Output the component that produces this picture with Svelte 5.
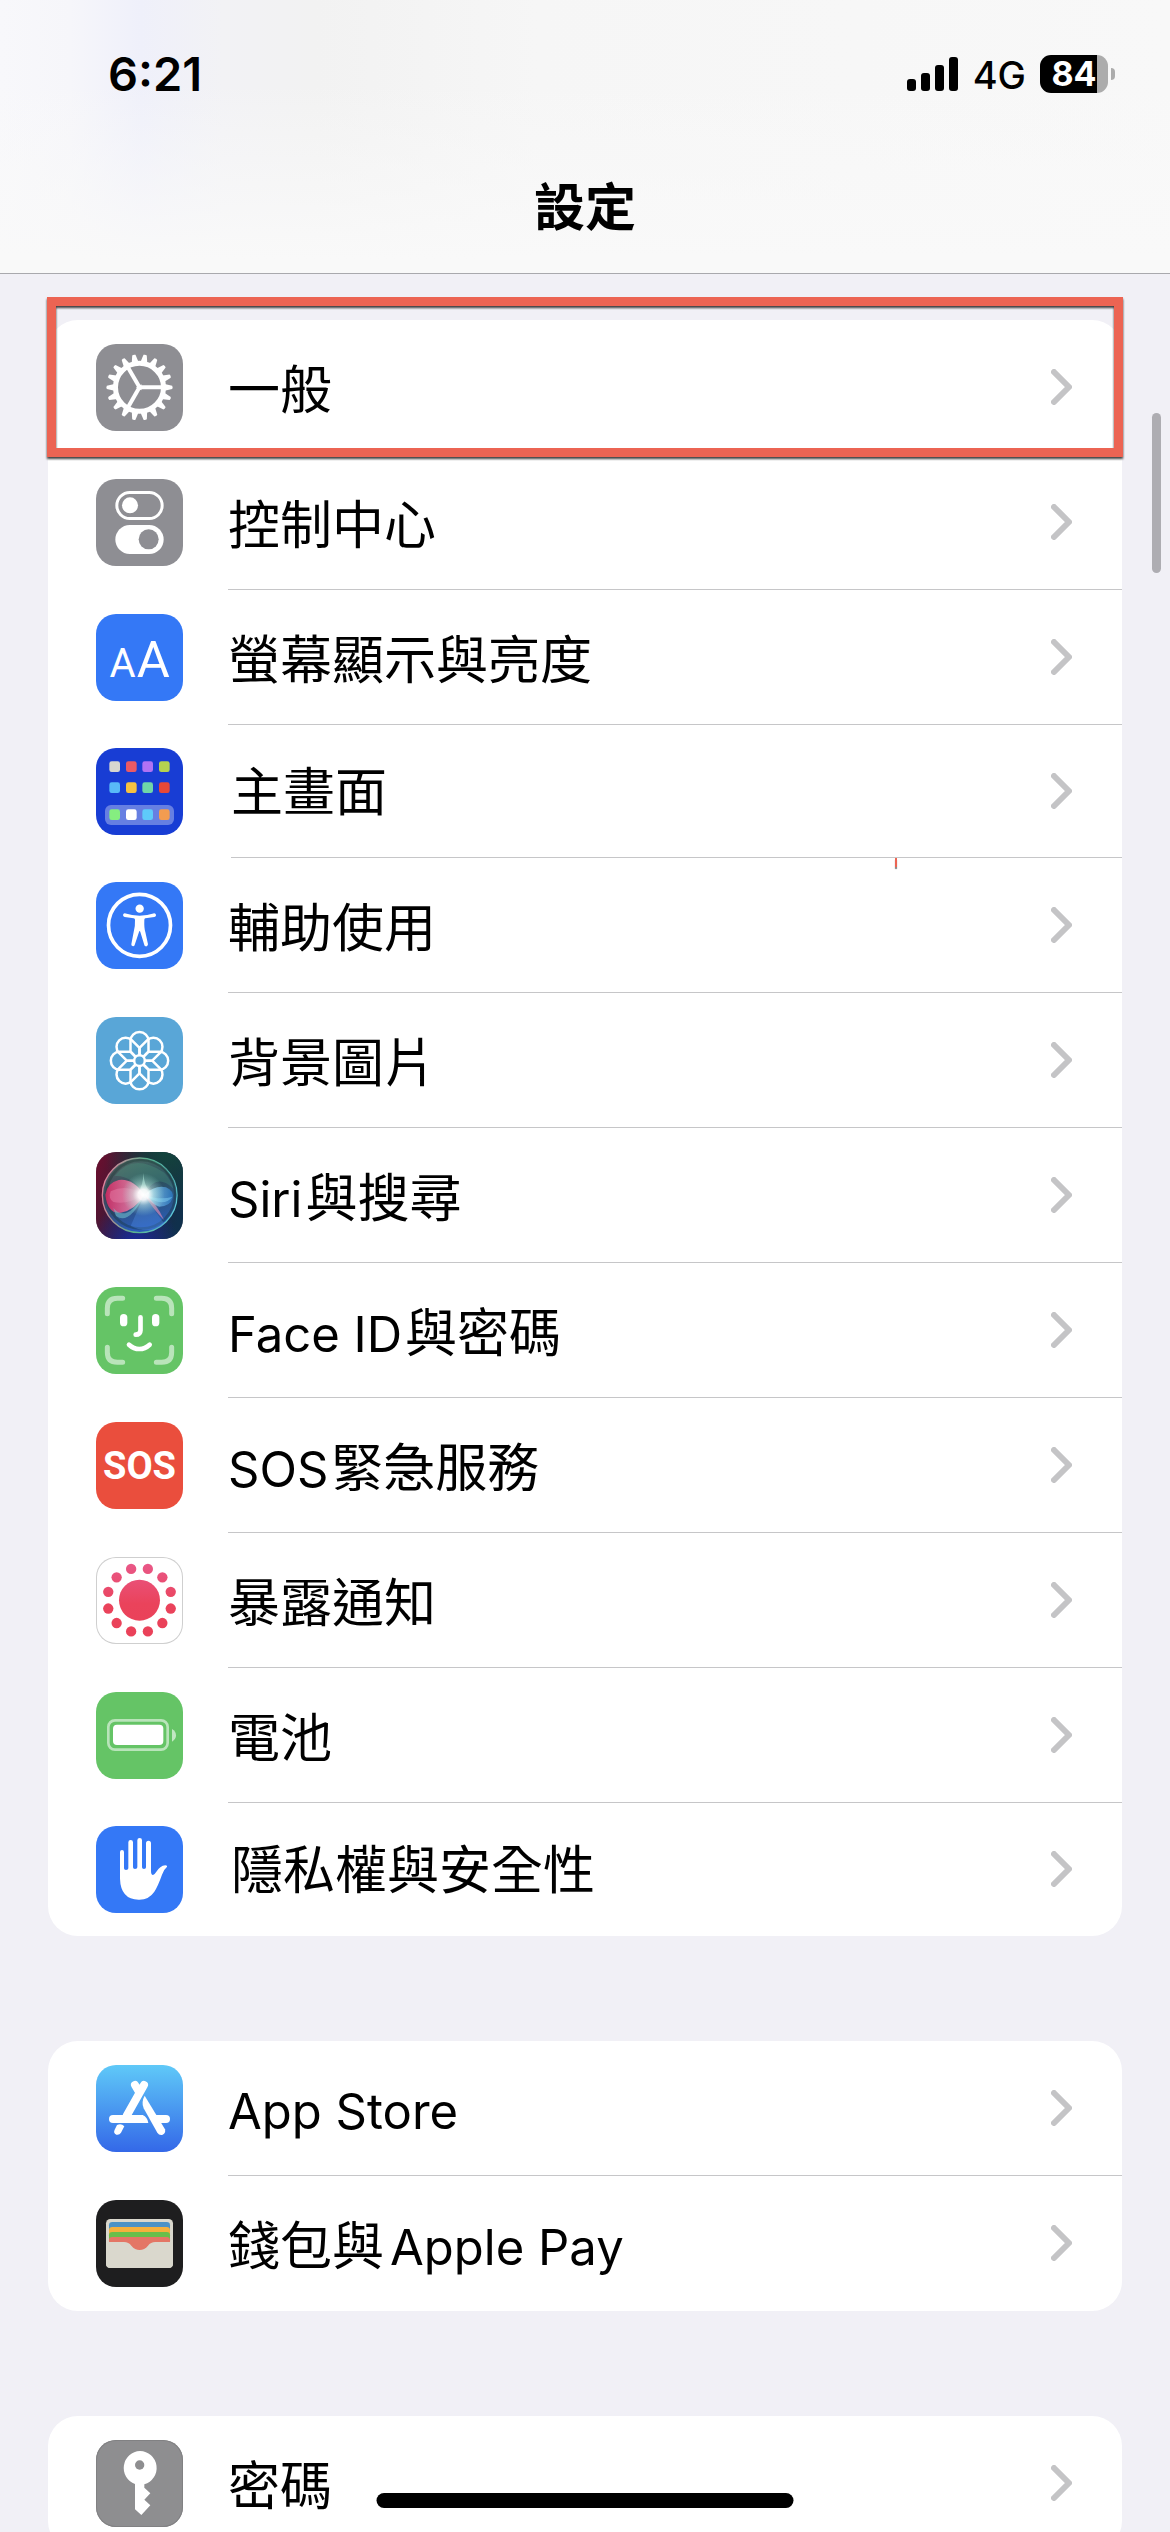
<script lang="ts">
  type Item = { icon: string; label: string[]; compact?: boolean; marked?: boolean };

  const groups: Item[][] = [
    [
      { icon: 'general', label: ['一般'], marked: true },
      { icon: 'control', label: ['控制中心'] },
      { icon: 'display', label: ['螢幕顯示與亮度'] },
      { icon: 'home', label: ['主畫面'], compact: true },
      { icon: 'access', label: ['輔助使用'] },
      { icon: 'wallpaper', label: ['背景圖片'] },
      { icon: 'siri', label: ['Siri', '與搜尋'] },
      { icon: 'faceid', label: ['Face ID', '與密碼'] },
      { icon: 'sos', label: ['SOS', '緊急服務'] },
      { icon: 'exposure', label: ['暴露通知'] },
      { icon: 'battery', label: ['電池'] },
      { icon: 'privacy', label: ['隱私權與安全性'], compact: true },
    ],
    [
      { icon: 'appstore', label: ['App Store'] },
      { icon: 'wallet', label: ['錢包與', 'Apple Pay'] },
    ],
    [{ icon: 'key', label: ['密碼'] }],
  ];

  const isLatin = (text: string) => /^[A-Za-z]/.test(text);
  const around = (n: number, start = 0) => Array.from({ length: n }, (_, i) => start + (i * 360) / n);
  const tiles = [
    [40, 40, '#d6d6d0'], [90, 40, '#ea5a65'], [139, 40, '#b072f4'], [189, 40, '#b5d24f'],
    [40, 103, '#58b9f8'], [90, 103, '#f6c140'], [139, 103, '#6fd6a8'], [189, 103, '#e64838'],
    [40, 184, '#85ee80'], [90, 184, '#ffffff'], [139, 184, '#5ecbfa'], [189, 184, '#f39c50'],
  ];
</script>

{#snippet glyph(kind: string)}
  <svg class="icon {kind}" viewBox="0 0 261 261" aria-hidden="true">
    {#if kind === 'general'}
      <g transform="translate(130.5 130)" fill="#fff">
        {#each around(18) as a}
          <path d="M72 -11 L98 -5 Q101 0 98 5 L72 11Z" transform="rotate({a})" />
        {/each}
        <circle r="72" fill="none" stroke="#fff" stroke-width="15" />
        {#each around(3) as a}
          <path d="M0 -6 H68 V6 H0Z" transform="rotate({a})" />
        {/each}
        <path d="M-11 0 L6 -9 V9Z" />
      </g>
    {:else if kind === 'control'}
      <rect x="62.5" y="40.5" width="136" height="78" rx="39" fill="none" stroke="#fff" stroke-width="9" />
      <circle cx="102" cy="79" r="24" fill="#fff" />
      <rect x="58" y="138" width="145" height="87" rx="43.5" fill="#fff" />
      <circle cx="158" cy="181" r="30" fill="#8e8e93" />
    {:else if kind === 'display'}
      <text x="80" y="188" class="small-a">A</text>
      <text x="172" y="188" class="large-a">A</text>
    {:else if kind === 'home'}
      <rect x="27" y="171" width="207" height="60" rx="18" fill="#fff" opacity=".34" />
      {#each tiles as [x, y, fill]}
        <rect {x} {y} width="32" height="32" rx="7" {fill} />
      {/each}
    {:else if kind === 'access'}
      <circle cx="130.5" cy="130" r="93" fill="none" stroke="#fff" stroke-width="11" />
      <circle cx="131" cy="80" r="12.5" fill="#fff" />
      <path d="M86 94 Q108 101 131 101 Q154 101 175 94 Q181 95 180 101 Q179 104 175 105 L148 109 Q145 110 145 113 Q144 138 148 150 L156 187 Q155 194 149 193 Q146 193 145 189 L133 150 Q131 144 129 150 L116 189 Q115 193 111 193 Q105 192 106 187 L113 150 Q118 130 117 113 Q117 110 113 109 L86 105 Q81 104 81 99 Q82 95 86 94Z" fill="#fff" />
    {:else if kind === 'wallpaper'}
      <g transform="translate(130.5 131)" fill="none" stroke="#fff" stroke-width="7.5" stroke-linejoin="round">
        {#each around(8) as a}
          <path d="M-10 -10 L-27 -27 V-60 A27 26 0 0 1 27 -60 V-27 L10 -10" transform="rotate({a})" />
        {/each}
        <circle r="16" />
      </g>
    {:else if kind === 'siri'}
      <defs>
        <linearGradient id="siri-base" x1="0" y1=".3" x2="1" y2=".6">
          <stop offset="0" stop-color="#65102f" />
          <stop offset=".5" stop-color="#24203c" />
          <stop offset="1" stop-color="#10304c" />
        </linearGradient>
        <radialGradient id="siri-green" cx=".8" cy="0" r=".7">
          <stop offset="0" stop-color="#12443c" />
          <stop offset="1" stop-color="#12443c" stop-opacity="0" />
        </radialGradient>
        <radialGradient id="siri-blue" cx=".45" cy="1.05" r=".5">
          <stop offset="0" stop-color="#1b2a9c" />
          <stop offset="1" stop-color="#1b2a9c" stop-opacity="0" />
        </radialGradient>
        <linearGradient id="siri-rim" x1="0" y1=".4" x2="1" y2=".6">
          <stop offset="0" stop-color="#e0809a" />
          <stop offset=".5" stop-color="#58b08c" />
          <stop offset="1" stop-color="#5cc8d8" />
        </linearGradient>
        <linearGradient id="siri-orb" x1="0" y1="0" x2=".3" y2="1">
          <stop offset="0" stop-color="#5c8070" stop-opacity=".8" />
          <stop offset=".5" stop-color="#34586a" stop-opacity=".75" />
          <stop offset="1" stop-color="#2c64c0" stop-opacity=".85" />
        </linearGradient>
        <linearGradient id="siri-pink">
          <stop offset="0" stop-color="#dc2a66" />
          <stop offset="1" stop-color="#f4a0c0" />
        </linearGradient>
        <linearGradient id="siri-cyan">
          <stop offset="0" stop-color="#b8ecff" />
          <stop offset="1" stop-color="#2a7cc8" />
        </linearGradient>
        <radialGradient id="siri-glow">
          <stop offset="0" stop-color="#fff" />
          <stop offset=".25" stop-color="#fff" stop-opacity=".9" />
          <stop offset=".5" stop-color="#d8fff4" stop-opacity=".45" />
          <stop offset="1" stop-color="#a0f0e0" stop-opacity="0" />
        </radialGradient>
      </defs>
      <rect width="261" height="261" fill="url(#siri-base)" />
      <rect width="261" height="261" fill="url(#siri-green)" />
      <rect width="261" height="261" fill="url(#siri-blue)" />
      <circle cx="131" cy="130" r="112" fill="url(#siri-orb)" stroke="url(#siri-rim)" stroke-width="4" />
      <circle cx="135" cy="127" r="103" fill="none" stroke="#14302c" stroke-width="8" opacity=".35" />
      <path d="M56 72 Q110 0 205 62 Q226 84 232 110 Q180 60 145 128 Q110 70 56 72Z" fill="#4fae8c" opacity=".25" />
      <path d="M145 128 Q110 78 68 84 Q34 92 28 128 Q34 186 74 182 Q118 174 145 128Z" fill="url(#siri-pink)" opacity=".85" />
      <path d="M145 128 Q92 94 44 118 Q36 140 52 150 Q92 160 145 128Z" fill="#e884ac" opacity=".45" />
      <path d="M52 168 Q90 214 145 128 Q100 220 60 192Z" fill="#7ad0d8" opacity=".5" />
      <path d="M145 128 Q178 98 210 106 Q234 116 230 138 Q222 164 190 164 Q168 158 145 128Z" fill="url(#siri-cyan)" opacity=".75" />
      <path d="M145 128 Q190 146 230 134 Q200 170 145 128Z" fill="#8fe0ff" opacity=".4" />
      <path d="M145 128 Q180 150 204 204 Q170 170 145 128Z" fill="#f090b8" opacity=".6" />
      <path d="M145 128 Q110 180 84 216 Q118 172 145 128 Q186 190 206 216 Q160 250 104 222Z" fill="#4f90e8" opacity=".35" />
      <path d="M142 62 Q146 110 164 116 L148 140 L126 122 Q142 100 142 62Z" fill="#c8fff0" opacity=".45" />
      <circle cx="142" cy="128" r="64" fill="url(#siri-glow)" />
    {:else if kind === 'faceid'}
      <path d="M34 80 V64 Q34 34 64 34 H80 M181 34 H197 Q227 34 227 64 V80 M227 181 V196 Q227 226 197 226 H181 M80 226 H64 Q34 226 34 196 V181" fill="none" stroke="#fff" stroke-width="15" stroke-linecap="round" opacity=".55" />
      <rect x="72" y="81" width="22" height="37" rx="11" fill="#fff" />
      <rect x="168" y="81" width="22" height="37" rx="11" fill="#fff" />
      <path d="M133.5 91 V130 Q133 143 119 143 M99 173 Q113 186 130 186 Q147 186 161 173" fill="none" stroke="#fff" stroke-width="14" stroke-linecap="round" />
    {:else if kind === 'sos'}
      <text x="130.5" y="171" class="sos-text">SOS</text>
    {:else if kind === 'exposure'}
      <defs>
        <linearGradient id="exposure-fill" gradientUnits="userSpaceOnUse" x1="0" y1="20" x2="0" y2="240">
          <stop offset="0" stop-color="#e95888" />
          <stop offset=".55" stop-color="#ea435b" />
          <stop offset="1" stop-color="#ea4159" />
        </linearGradient>
      </defs>
      <g fill="url(#exposure-fill)">
        <circle cx="130.5" cy="129.5" r="61.5" />
        {#each around(12, 15) as a}
          <circle cx={130.5 + 97 * Math.cos((a * Math.PI) / 180)} cy={129.5 + 97 * Math.sin((a * Math.PI) / 180)} r="15.5" />
        {/each}
      </g>
    {:else if kind === 'battery'}
      <rect x="37" y="85" width="178" height="88" rx="20" fill="none" stroke="#fff" stroke-width="8" opacity=".55" />
      <rect x="51" y="98" width="151" height="61" rx="12" fill="#fff" />
      <path d="M228 111 Q240 118 240 130 Q240 142 228 149Z" fill="#fff" opacity=".6" />
    {:else if kind === 'privacy'}
      <path d="M72 78 a6 6 0 0 1 12 0 V127 Q84 132 90 132 Q97 132 97 127 V49 a7 7 0 0 1 14 0 V124 Q111 129 117 129 Q124 129 124 124 V43 a7 7 0 0 1 14 0 V124 Q138 129 144 129 Q150 129 150 124 V52 a7 7 0 0 1 15 0 V135 Q165 147 171 147 Q175 147 180 139 Q192 119 208 118 Q216 119 212 124 Q204 130 198 146 Q186 180 175 197 Q158 222 128 221 Q74 220 72 158Z" fill="#fff" />
    {:else if kind === 'appstore'}
      <g fill="none" stroke="#fff" stroke-width="24" stroke-linecap="round">
        <path d="M117 60 L128 79 M144 60 L92 152" />
        <path d="M178 162 H210" />
      </g>
      <path d="M51 150 H140 Q155 157 157 174 H51 A12 12 0 0 1 51 150Z" fill="#fff" />
      <path d="M146 92 L207 193 Q210 205 200 209 Q190 212 184 203 L143 130 Q135 111 146 92Z" fill="#fff" />
      <path d="M63 180 Q76 174 85 184 L75 203 Q70 211 61 209 Q51 204 56 194Z" fill="#fff" />
    {:else if kind === 'wallet'}
      <rect x="30" y="57" width="201" height="147" rx="13" fill="#dad8cd" />
      <path d="M39 140 V76 Q39 66 49 66 H212 Q222 66 222 76 V140Z" fill="#4a92c6" />
      <path d="M39 140 V91 Q39 81 49 81 H212 Q222 81 222 91 V140Z" fill="#f4b03d" />
      <path d="M39 140 V106 Q39 96 49 96 H212 Q222 96 222 106 V140Z" fill="#69be4a" />
      <path d="M39 152 V121 Q39 111 49 111 H212 Q222 111 222 121 V152Z" fill="#e47665" />
      <path d="M30 126 H84 Q98 126 106 137 Q117 150 131 150 Q145 150 156 137 Q164 126 178 126 H231 V191 Q231 204 218 204 H43 Q30 204 30 191Z" fill="#dad8cd" />
    {:else if kind === 'key'}
      <path d="M132 33 A51 51 0 0 1 145 133 V143 L163 160 L145 179 L163 196 L136 225 L117 208 V132 A51 51 0 0 1 132 33Z" fill="#fff" />
      <circle cx="131" cy="75" r="14" fill="#8e8e90" />
    {/if}
  </svg>
{/snippet}

<div class="screen" lang="zh-Hant">
  <header>
    <div class="status">
      <span class="time">6:21</span>
      <div class="indicators">
        <svg class="signal" viewBox="0 0 51 34" aria-hidden="true">
          <rect x="0" y="22" width="9" height="12" rx="3" />
          <rect x="14" y="16" width="9" height="18" rx="3" />
          <rect x="28" y="8" width="9" height="26" rx="3" />
          <rect x="42" y="0" width="9" height="34" rx="3" />
        </svg>
        <span class="network">4G</span>
        <span class="power"><span class="level">84</span></span>
      </div>
    </div>
    <h1>設定</h1>
  </header>

  <main>
    {#each groups as group}
      <nav class="card">
        {#each group as item}
          <a href="#{item.icon}" class="row" class:compact={item.compact} class:marked={item.marked}>
            {@render glyph(item.icon)}
            <span class="body">
              <span class="label">
                {#each item.label as part}<span class={isLatin(part) ? 'latin' : 'han'}>{part}</span>{/each}
              </span>
              <svg class="chevron" viewBox="0 0 21 36" aria-hidden="true"><path d="M3 3 L18 18 L3 33" /></svg>
            </span>
            {#if item.icon === 'home'}<i class="tick"></i>{/if}
          </a>
        {/each}
      </nav>
    {/each}
  </main>

  <div class="scrollbar"></div>
  <div class="home-bar"></div>
</div>

<style>
  :global(body) {
    margin: 0;
    background: #f1f0f6;
  }
  .screen {
    position: relative;
    height: 100vh;
    overflow: hidden;
    box-sizing: border-box;
    background: #f1f0f6;
    color: #000;
    font-family: Inter, 'Noto Sans CJK TC', sans-serif;
  }
  header {
    box-sizing: border-box;
    height: 274px;
    border-bottom: 1px solid #a9a9ad;
    background:
      linear-gradient(to bottom, rgba(248, 248, 248, 0) 30%, #f9f9f9 95%),
      linear-gradient(to right, #f8f8fb 0, #f6f6fa 6%, #eff0fa 12%, #f2f2f5 19%, #f2f2f2 27%, #f6f6f6 46%, #f8f8f8 100%);
  }
  .status {
    display: flex;
    justify-content: space-between;
    align-items: center;
    height: 148px;
    padding: 0 55px 0 108px;
  }
  .time {
    font-size: 47px;
    font-weight: 600;
    line-height: 56px;
  }
  .indicators {
    display: flex;
    align-items: center;
  }
  .signal {
    width: 51px;
    height: 34px;
    margin-right: 15px;
  }
  .network {
    margin-right: 14px;
    padding-top: 2px;
    font-size: 38px;
    font-weight: 500;
    line-height: 44px;
  }
  .power {
    position: relative;
    width: 68px;
    height: 38px;
    margin-right: 7px;
    border-radius: 11px;
    background: linear-gradient(to right, #000 57px, #acacac 57px);
  }
  .power::after {
    content: '';
    position: absolute;
    top: 13px;
    right: -7px;
    width: 4px;
    height: 12px;
    border-radius: 0 6px 6px 0;
    background: #acacac;
  }
  .level {
    display: block;
    color: #fff;
    font-size: 34px;
    font-weight: 700;
    line-height: 38px;
    text-align: center;
  }
  h1 {
    margin: 24px 0 0;
    font-size: 51px;
    font-weight: 700;
    line-height: 72px;
    text-align: center;
  }
  main {
    display: flex;
    flex-direction: column;
    gap: 105px;
    padding: 46px 48px;
  }
  .card {
    border-radius: 30px;
    background: #fff;
  }
  .row {
    position: relative;
    display: flex;
    align-items: center;
    gap: 45px;
    height: 135px;
    padding-left: 48px;
    color: inherit;
    text-decoration: none;
  }
  .row.compact {
    height: 133px;
    gap: 48px;
  }
  .icon {
    flex: none;
    width: 87px;
    height: 87px;
    border-radius: 20px;
    background: #8e8e93;
  }
  .icon.display, .icon.access, .icon.privacy { background: #3478f6; }
  .icon.home { background: #183dd4; }
  .icon.wallpaper { background: #59a6d7; }
  .icon.faceid, .icon.battery { background: #65c466; }
  .icon.sos { background: #ea4e3d; }
  .icon.exposure {
    background: #fff;
    box-shadow: inset 0 0 0 1px #cfcfcf;
  }
  .icon.appstore { background: linear-gradient(#5fc9f8, #3468e8); }
  .icon.wallet { background: #1e1e1f; }
  .icon.key {
    background: #8e8e90;
    box-shadow: inset 0 0 0 1px #818183;
  }
  .small-a, .large-a, .sos-text {
    fill: #fff;
    font-family: Roboto, sans-serif;
    text-anchor: middle;
  }
  .small-a { font-size: 120px; }
  .large-a { font-size: 152px; }
  .sos-text {
    font-size: 114px;
    font-weight: 700;
  }
  .body {
    flex: 1;
    display: flex;
    align-items: center;
    justify-content: space-between;
    box-sizing: border-box;
    height: 100%;
    padding-right: 50px;
    border-bottom: 1px solid #c6c6c8;
  }
  .marked .body, .row:last-child .body {
    border-bottom-color: transparent;
  }
  .label {
    display: flex;
    align-items: baseline;
    padding-top: 8px;
    line-height: 72px;
  }
  .compact .label {
    padding-top: 4px;
  }
  .han {
    font-size: 52px;
  }
  .latin {
    font-size: 49px;
  }
  .latin + .han {
    margin-left: 3px;
  }
  .han + .latin {
    margin-left: 6px;
  }
  .chevron {
    width: 21px;
    height: 36px;
    fill: none;
    stroke: #c4c4c6;
    stroke-width: 6;
    stroke-linecap: round;
    stroke-linejoin: round;
  }
  .marked::after {
    content: '';
    position: absolute;
    inset: -23px -1px -2px;
    border: 9px solid #ec6453;
    filter: drop-shadow(0 2px 1px rgba(0, 0, 0, 0.75));
  }
  .tick {
    position: absolute;
    right: 225px;
    bottom: -9px;
    width: 2px;
    height: 9px;
    background: #ec6453;
    box-shadow: 0 2px 1px rgba(0, 0, 0, 0.5);
  }
  .scrollbar {
    position: absolute;
    top: 413px;
    right: 9px;
    width: 9px;
    height: 160px;
    border-radius: 5px;
    background: #aeadb2;
  }
  .home-bar {
    position: absolute;
    bottom: 24px;
    left: 50%;
    width: 417px;
    height: 15px;
    border-radius: 8px;
    background: #000;
    transform: translateX(-50%);
  }
</style>
